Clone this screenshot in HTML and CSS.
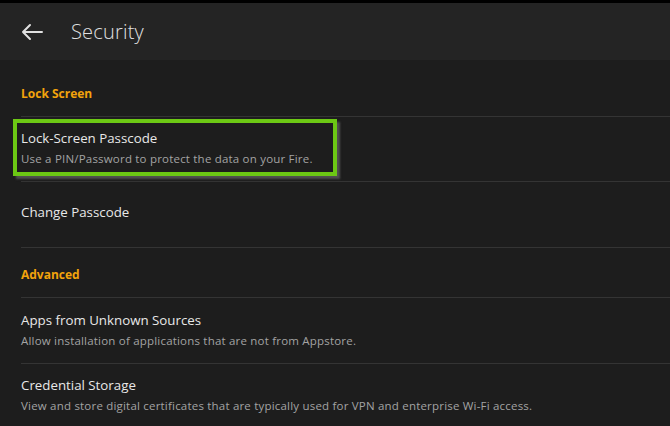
FILE: index.html
```html
<!DOCTYPE html>
<html lang="en">
<head>
    <meta charset="UTF-8">
    <meta name="viewport" content="width=device-width, initial-scale=1.0">
    <title>Security</title>
    <link rel="stylesheet" href="styles.css">
</head>
<body>
    <header class="toolbar">
        <button class="back-button" aria-label="Back">
            <svg width="22" height="18" viewBox="0 0 22 18">
                <path d="M21 9H2M9 2L2 9l7 7" fill="none" stroke="#e0e0e0" stroke-width="2" stroke-linecap="round" stroke-linejoin="round"/>
            </svg>
        </button>
        <h1>Security</h1>
    </header>

    <main class="settings">
        <div class="section-title first">Lock Screen</div>
        <div class="setting-item highlighted">
            <div class="setting-name">Lock-Screen Passcode</div>
            <div class="setting-desc">Use a PIN/Password to protect the data on your Fire.</div>
        </div>
        <div class="setting-item single">
            <div class="setting-name">Change Passcode</div>
        </div>

        <div class="section-title">Advanced</div>
        <div class="setting-item apps">
            <div class="setting-name">Apps from Unknown Sources</div>
            <div class="setting-desc">Allow installation of applications that are not from Appstore.</div>
        </div>
        <div class="setting-item">
            <div class="setting-name">Credential Storage</div>
            <div class="setting-desc">View and store digital certificates that are typically used for VPN and enterprise Wi-Fi access.</div>
        </div>
    </main>
</body>
</html>
```

FILE: styles.css
```css
body {
    font-family: 'Open Sans', 'Liberation Sans', sans-serif;
    margin: 0;
    padding: 0;
    background: #1d1d1d;
    color: #e6e6e6;
    overflow: hidden;
}
.toolbar {
    display: flex;
    align-items: center;
    height: 57px;
    background: #242424;
    border-top: 3px solid #000;
}
.back-button {
    background: none;
    border: none;
    padding: 0;
    margin: 0 0 0 21px;
    width: 22px;
    height: 18px;
    display: flex;
    cursor: pointer;
}
.toolbar h1 {
    margin: 0 0 0 28px;
    font-size: 20px;
    font-weight: 300;
    color: #e0e0e0;
    letter-spacing: 0.2px;
}
.settings {
    margin-left: 21px;
}
.section-title {
    color: #f2a30c;
    font-size: 12px;
    font-weight: bold;
    line-height: 16px;
    padding: 19px 0 14px;
    border-bottom: 1px solid #343434;
}
.section-title.first {
    padding: 26px 0 14px;
}
.setting-item {
    position: relative;
    padding: 12px 0 14px;
    border-bottom: 1px solid #343434;
}
.setting-item.apps {
    padding-top: 13px;
}
.setting-item.single {
    padding: 21px 0 26px;
}
.setting-name {
    font-size: 13.3px;
    line-height: 18px;
    color: #e8e8e8;
}
.setting-desc {
    font-size: 11.5px;
    letter-spacing: 0.2px;
    line-height: 16px;
    margin-top: 4px;
    color: #a3a3a3;
}
/* green outline around the passcode row */
.highlighted::after {
    content: "";
    position: absolute;
    left: -8px;
    top: 2px;
    width: 316px;
    height: 49px;
    border: 4px solid #6cc814;
    box-shadow: 3px 3px 2px #505050;
}
```
